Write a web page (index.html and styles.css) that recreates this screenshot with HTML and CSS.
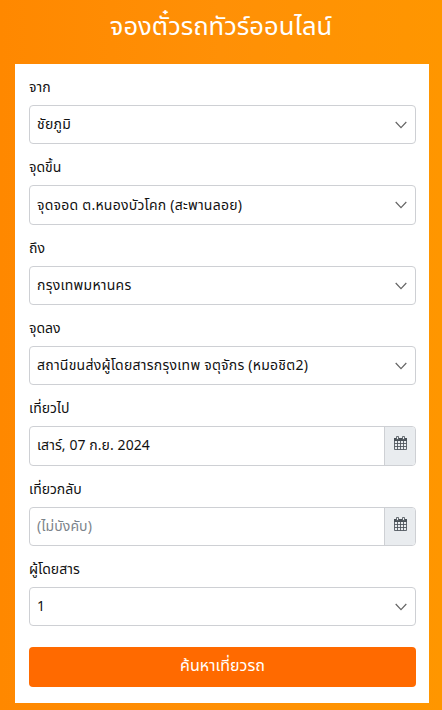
FILE: index.html
```html
<!DOCTYPE html>
<html lang="th">
<head>
  <meta charset="UTF-8">
  <meta name="viewport" content="width=device-width, initial-scale=1">
  <title>จองตั๋วรถทัวร์ออนไลน์</title>
  <link rel="stylesheet" href="styles.css">
</head>
<body>

  <svg class="sprite" aria-hidden="true">
    <symbol id="chevron" viewBox="0 0 12 8">
      <path d="M.7 1 6 6.7 11.3 1" fill="none" stroke="currentColor" stroke-width="1.2"/>
    </symbol>
    <symbol id="calendar" viewBox="0 0 13 14">
      <path d="M0 2h13v3H0z" fill="currentColor"/>
      <path d="M.5 2.5h12v11H.5zM.5 7.5h12M.5 10.5h12M3.5 5v8.5M6.5 5v8.5M9.5 5v8.5" fill="none" stroke="currentColor" stroke-width=".85"/>
      <path d="M2.5.5h2v3h-2zM8.5.5h2v3h-2z" fill="#e9ecef" stroke="currentColor" stroke-width=".8"/>
    </symbol>
  </svg>

  <header>
    <h1>จองตั๋วรถทัวร์ออนไลน์</h1>
  </header>

  <form class="search-form">
    <div class="form-group">
      <label for="from">จาก</label>
      <div class="select-box">
        <select id="from"><option>ชัยภูมิ</option></select>
        <svg class="chevron"><use href="#chevron"/></svg>
      </div>
    </div>

    <div class="form-group">
      <label for="pickup">จุดขึ้น</label>
      <div class="select-box">
        <select id="pickup"><option>จุดจอด ต.หนองบัวโคก (สะพานลอย)</option></select>
        <svg class="chevron"><use href="#chevron"/></svg>
      </div>
    </div>

    <div class="form-group">
      <label for="to">ถึง</label>
      <div class="select-box">
        <select id="to"><option>กรุงเทพมหานคร</option></select>
        <svg class="chevron"><use href="#chevron"/></svg>
      </div>
    </div>

    <div class="form-group">
      <label for="dropoff">จุดลง</label>
      <div class="select-box">
        <select id="dropoff"><option>สถานีขนส่งผู้โดยสารกรุงเทพ จตุจักร (หมอชิต2)</option></select>
        <svg class="chevron"><use href="#chevron"/></svg>
      </div>
    </div>

    <div class="form-group">
      <label for="depart">เที่ยวไป</label>
      <div class="date-box">
        <input id="depart" type="text" value="เสาร์, 07 ก.ย. 2024">
        <span class="addon"><svg class="calendar"><use href="#calendar"/></svg></span>
      </div>
    </div>

    <div class="form-group">
      <label for="return">เที่ยวกลับ</label>
      <div class="date-box">
        <input id="return" type="text" placeholder="(ไม่บังคับ)">
        <span class="addon"><svg class="calendar"><use href="#calendar"/></svg></span>
      </div>
    </div>

    <div class="form-group">
      <label for="passengers">ผู้โดยสาร</label>
      <div class="select-box">
        <select id="passengers"><option>1</option></select>
        <svg class="chevron"><use href="#chevron"/></svg>
      </div>
    </div>

    <button type="button" class="btn-search">ค้นหาเที่ยวรถ</button>
  </form>

</body>
</html>
```

FILE: styles.css
```css
:root {
  --text-color: #111;
  --border-color: #ced0d4;
  --accent-color: #ff6a00;
  --font-main: "Noto Sans", "Noto Sans Thai", "Open Sans", sans-serif;
}

* {
  box-sizing: border-box;
}

body {
  margin: 0;
  height: 710px;
  overflow: hidden;
  font-family: var(--font-main);
  font-size: 14px;
  color: var(--text-color);
  background: linear-gradient(90deg, #ff8800, #ff9006 50%, #ff9600);
}

.sprite {
  display: none;
}

header {
  height: 64px;
  text-align: center;
}

header h1 {
  margin: 0;
  font-size: 25.6px;
  font-weight: 400;
  line-height: 52px;
  color: #fff;
  white-space: nowrap;
}

.search-form {
  height: 639px;
  margin: 0 13px 0 15px;
  padding: 11px 13px 0 14px;
  background: #fff;
}

.form-group {
  height: 80.35px;
}

.form-group label {
  display: block;
  height: 30px;
  line-height: 24px;
}

.select-box {
  position: relative;
}

.select-box select,
.date-box {
  display: flex;
  width: 100%;
  height: 39.4px;
  border: 1px solid var(--border-color);
  border-radius: 4px;
  background: #fff;
}

.select-box select {
  appearance: none;
  padding: 0 36px 2px 7px;
  font: inherit;
  letter-spacing: 0.24px;
  color: inherit;
}

.chevron {
  position: absolute;
  top: 16px;
  right: 9px;
  width: 12px;
  height: 8px;
  color: #666;
  pointer-events: none;
}

.date-box {
  overflow: hidden;
}

.date-box input {
  flex: 1;
  min-width: 0;
  padding: 0 7px 2px;
  border: 0;
  font: inherit;
  letter-spacing: 0.08px;
  color: inherit;
  background: none;
}

.date-box input::placeholder {
  color: #7b838a;
}

.addon {
  width: 31px;
  padding: 9px 0 0 9px;
  border-left: 1px solid var(--border-color);
  background: #e9ecef;
  color: #495057;
}

.calendar {
  display: block;
  width: 13px;
  height: 14px;
}

.btn-search {
  display: block;
  width: 100%;
  height: 40px;
  margin-top: 9.5px;
  padding: 0 0 2px;
  border: 0;
  border-radius: 4px;
  font-family: inherit;
  font-size: 16px;
  color: #fff;
  background: var(--accent-color);
}
```
